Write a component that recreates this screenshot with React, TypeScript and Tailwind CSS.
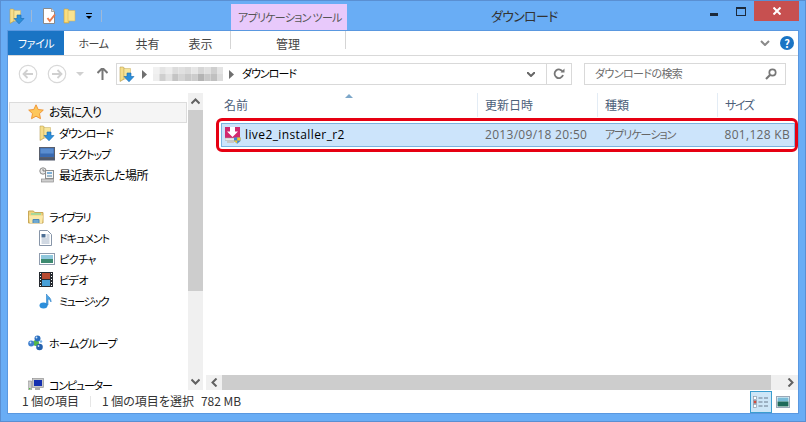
import React from "react";

const DownloadFolder = ({ s = 16 }: { s?: number }) => (
  <svg width={s} height={s} viewBox="0 0 16 16" className="shrink-0">
    <path d="M1 1h3.4l1 1.2V13L1 15.5z" fill="#e2c667" stroke="#b7a05a" strokeWidth=".6" />
    <path d="M5 2.5h6.5v10.5H5z" fill="#f6e59b" stroke="#cdb672" strokeWidth=".6" />
    <path d="M1.5 1.6h2.8v11.2L1.5 14.4z" fill="#f5dd8b" />
    <path d="M8 7h4v3.5h3L10 15.8 5 10.5h3z" fill="#2a8fdc" stroke="#1769ae" strokeWidth=".6" />
  </svg>
);

const PlainFolder = () => (
  <svg width="14" height="16" viewBox="0 0 14 16">
    <path d="M1 1h4l1 1.2V15H1z" fill="#ecc95f" stroke="#c2a24f" strokeWidth=".6" />
    <path d="M5 2.5h7V13H5z" fill="#f8e390" stroke="#d4b662" strokeWidth=".6" />
    <path d="M1.6 1.6h3V14h-3z" fill="#f9dd80" />
  </svg>
);

const NoteCheck = () => (
  <svg width="16" height="16" viewBox="0 0 16 16">
    <path d="M1.5.5h8l3 3v12h-11z" fill="#fff" stroke="#8a8a8a" />
    <path d="M9.5.5v3h3" fill="#ddd" stroke="#8a8a8a" strokeWidth=".7" />
    <path d="M5.5 10l2.3 3 5.2-6.5" fill="none" stroke="#ea7a4a" strokeWidth="2" />
  </svg>
);

const CircleArrow = ({ dir }: { dir: "l" | "r" }) => (
  <svg width="20" height="20" viewBox="0 0 20 20">
    <circle cx="10" cy="10" r="8.7" fill="#fff" stroke="#d8d8d8" strokeWidth="1.2" />
    <path
      d={dir === "l" ? "M15 10H6M9.5 6L5.5 10l4 4" : "M5 10h9M10.5 6l4 4-4 4"}
      fill="none"
      stroke="#d0d0d0"
      strokeWidth="1.8"
    />
  </svg>
);

const Chevron = ({ d, color = "#6a6a6a", w = 9, h = 6, sw = 2 }: { d: string; color?: string; w?: number; h?: number; sw?: number }) => (
  <svg width={w} height={h} viewBox={`0 0 ${w} ${h}`}>
    <path d={d} fill="none" stroke={color} strokeWidth={sw} />
  </svg>
);

const Star = () => (
  <svg width="16" height="16" viewBox="0 0 16 16">
    <path d="M8 .8l2.2 4.7 5.1.6-3.8 3.5 1 5.1L8 12.2l-4.5 2.5 1-5.1L.7 6.1l5.1-.6z" fill="#fdc75c" stroke="#ee8f2c" strokeWidth=".9" />
  </svg>
);

const Desktop = () => (
  <svg width="16" height="14" viewBox="0 0 16 14">
    <rect x=".5" y=".5" width="15" height="10" fill="#3a6ab0" stroke="#5a5f6c" />
    <rect x="1.5" y="1.5" width="13" height="5" fill="#5a8dd0" />
    <rect y="11" width="16" height="2.5" fill="#50596a" />
  </svg>
);

const Recent = () => (
  <svg width="16" height="16" viewBox="0 0 16 16">
    <circle cx="4" cy="4" r="3.2" fill="#e9e9e9" stroke="#8a8a8a" />
    <path d="M4 2v2h2" stroke="#555" strokeWidth=".7" fill="none" />
    <rect x="6.5" y="3.5" width="8" height="8" fill="#f4f4f4" stroke="#8d8d8d" />
    <rect x="8" y="5" width="5" height="2" fill="#7cb0d8" />
    <rect x="8" y="8" width="5" height="2" fill="#9fb8c8" />
    <rect x="2.5" y="12" width="12" height="3" fill="#cfcfcf" stroke="#8d8d8d" strokeWidth=".7" />
  </svg>
);

const Library = () => (
  <svg width="16" height="14" viewBox="0 0 16 14">
    <path d="M.5 2V1h5l1 1.5h8.5V13H.5z" fill="#f0d27c" stroke="#c8a858" />
    <rect x="3" y="3" width="10" height="2" fill="#a8d89a" />
    <path d="M1 5.5h14l-1 7.5H2z" fill="#fbe9a8" />
    <path d="M5 13V9.5h6V13" fill="#6fa9d2" stroke="#4d87b5" />
  </svg>
);

const Doc = () => (
  <svg width="13" height="16" viewBox="0 0 13 16">
    <path d="M.5.5h8l4 4v11H.5z" fill="#fff" stroke="#8795a8" />
    <rect x="2.5" y="4" width="4" height="3.5" fill="#4d6f94" />
    <path d="M7.5 5h3M7.5 7h3M2.5 9h8M2.5 11h8M2.5 13h8" stroke="#8aa0b8" strokeWidth=".8" />
  </svg>
);

const Picture = () => (
  <svg width="16" height="12" viewBox="0 0 16 12">
    <rect x=".5" y=".5" width="15" height="11" fill="#fff" stroke="#8f9cae" />
    <rect x="2" y="2" width="12" height="4" fill="#8fc7dc" />
    <rect x="2" y="6" width="12" height="4" fill="#3d8a70" />
  </svg>
);

const Video = () => (
  <svg width="14" height="15" viewBox="0 0 14 15">
    <rect width="14" height="15" fill="#262a30" />
    <rect x="3" y="1" width="8" height="6" fill="#b84a30" />
    <rect x="3" y="8" width="8" height="6" fill="#47a0d8" />
    <path d="M1 1.5h1M1 4.5h1M1 7.5h1M1 10.5h1M1 13.5h1M12 1.5h1M12 4.5h1M12 7.5h1M12 10.5h1M12 13.5h1" stroke="#fff" strokeWidth="1" />
  </svg>
);

const Music = () => (
  <svg width="14" height="16" viewBox="0 0 14 16">
    <ellipse cx="4.5" cy="12.5" rx="4" ry="3" fill="#2c8fdc" />
    <path d="M7.5 12V1c.5 2 5 3.5 4.5 8-1-2.5-3-3.2-3-3.2V12z" fill="#4ba6e6" stroke="#2a7cc4" strokeWidth=".6" />
  </svg>
);

const HomeGroup = () => (
  <svg width="16" height="16" viewBox="0 0 16 16">
    <circle cx="8" cy="8" r="3" fill="#54b848" />
    <circle cx="9.5" cy="3.5" r="3" fill="#2a6fc0" />
    <circle cx="3.2" cy="8.5" r="3" fill="#3f7fce" />
    <circle cx="11.5" cy="12" r="3.3" fill="#2562ae" />
    <circle cx="13" cy="6.5" r="1.3" fill="#7fb6e8" />
    <circle cx="8.5" cy="2.5" r=".9" fill="#cfe4fa" />
    <circle cx="2.5" cy="7.5" r=".9" fill="#cfe4fa" />
    <circle cx="10.5" cy="11" r=".9" fill="#cfe4fa" />
  </svg>
);

const Computer = () => (
  <svg width="16" height="16" viewBox="0 0 16 16">
    <rect x="0" y="4" width="3.5" height="10" fill="#ccc" stroke="#888" strokeWidth=".6" />
    <rect x="1" y="11" width="1.5" height="1.5" fill="#58b848" />
    <rect x="4.5" y="1.5" width="11" height="9" fill="#c8c8c8" stroke="#888" strokeWidth=".6" />
    <rect x="6" y="3" width="8" height="6" fill="#1530b0" />
    <rect x="7" y="11" width="5" height="2" fill="#aaa" />
  </svg>
);

const AppIcon = () => (
  <svg width="16" height="17" viewBox="0 0 16 17" className="shrink-0">
    <rect x="0" y="0" width="15" height="11" fill="#d2286e" />
    <path d="M5 0h5v4.5h3L7.5 10 2 4.5h3z" fill="#fff" />
    <rect x="0" y="11" width="14" height="2.5" fill="#e8e8e8" stroke="#aaa" strokeWidth=".5" />
    <rect x="2" y="13.5" width="7" height="2.5" fill="#c8c8c8" />
    <path d="M9 10.5h6.5V14L12.2 16.8 9 14z" fill="#3f86d0" />
    <path d="M12.2 10.5h3.3V13.5h-3.3zM9 13.5h3.2v3L9 14z" fill="#f3c632" />
  </svg>
);

const Mosaic = () => {
  const cols = ["#f1f1f1", "#e4e4e4", "#ececec", "#dcdcdc", "#e0e0e0", "#dadada", "#e6e6e6", "#d6d6d6", "#e0e0e0", "#cfcfcf", "#e4e4e4"];
  const cols2 = ["#eeeeee", "#cfcfcf", "#e2e2e2", "#c4c4c4", "#d4d4d4", "#c8c8c8", "#cccccc", "#b4b4b4", "#c8c8c8", "#c0c0c0", "#dcdcdc"];
  return (
    <svg width="70" height="14" viewBox="0 0 70 14" className="shrink-0">
      {cols.map((c, i) => (
        <rect key={i} x={i * 6.4} y="0" width="6.4" height="7" fill={c} />
      ))}
      {cols2.map((c, i) => (
        <rect key={i} x={i * 6.4} y="7" width="6.4" height="7" fill={c} />
      ))}
    </svg>
  );
};

const Tri = ({ className = "" }: { className?: string }) => (
  <svg width="5" height="9" viewBox="0 0 5 9" className={className}>
    <path d="M0 0l5 4.5L0 9z" fill="#6f6f6f" />
  </svg>
);

const NavRow = ({ icon, label, text, level = 0, active = false }: { icon: React.ReactNode; label: string; text: string; level?: 0 | 1; active?: boolean }) => (
  <div
    className={`mx-px flex h-[21px] shrink-0 items-center border pb-[2px] ${level === 0 ? "pl-[18px]" : "pl-[29px]"} ${
      active ? "border-[#dcdcdc] bg-[#f5f5f5]" : "border-transparent"
    }`}
  >
    <span className={`flex justify-start ${level === 0 ? "w-[21px]" : "w-[20px]"}`}>{icon}</span>
    <span className={`whitespace-nowrap text-black ${text}`}>{label}</span>
  </div>
);

const Gap = () => <div className="h-[21px] shrink-0" />;

const ColHead = ({ label, className = "" }: { label: string; className?: string }) => (
  <div className={`flex h-[24px] items-center border-r border-[#e3ecf5] pl-[7px] text-[12px] text-[#4c607a] ${className}`}>{label}</div>
);

export default function App() {
  return (
    <div className="flex h-[422px] w-[806px] flex-col overflow-hidden border border-[#5a8fd2] bg-[#69adf5] font-['Noto_Sans_CJK_JP','Liberation_Sans',sans-serif] text-black [font-feature-settings:'palt']">
      {/* title bar */}
      <div className="relative flex h-[29px] shrink-0 items-center pl-[8px]">
        <div className="flex items-center">
          <DownloadFolder />
          <div className="ml-[6px] h-[12px] w-px bg-[#9fb9d8]" />
          <div className="ml-[10px]"><NoteCheck /></div>
          <div className="ml-[5px]"><PlainFolder /></div>
          <div className="ml-[9px] flex flex-col items-center gap-[2px]">
            <div className="h-px w-[6px] bg-black" />
            <div className="h-0 w-0 border-x-[3px] border-t-[3px] border-x-transparent border-t-black" />
          </div>
          <div className="ml-[9px] h-[12px] w-px bg-[#9fb9d8]" />
        </div>
        <div className="absolute left-[230px] top-[3px] flex h-[26px] w-[116px] items-center whitespace-nowrap bg-[#e8c9fb] pl-[7px] text-[11px] tracking-[-0.7px] text-[#555]">
          アプリケーション ツール
        </div>
        <div className="absolute left-[490px] top-[5px] text-[13px] leading-[20px] tracking-[-0.7px] text-[#333]">ダウンロード</div>
        <div className="absolute right-[6px] top-[0px] flex h-[21px] items-start">
          <div className="mr-[18px] mt-[12px] h-[3px] w-[8px] bg-[#1c2a3c]" />
          <div className="mr-[8px] mt-[6px] h-[9px] w-[10px] border border-t-[2px] border-[#1c2a3c]" />
          <div className="flex h-[20px] w-[45px] items-center justify-center bg-[#c75050]">
            <svg width="8" height="8" viewBox="0 0 8 8">
              <path d="M.5.5l7 7M7.5.5l-7 7" stroke="#fff" strokeWidth="2" />
            </svg>
          </div>
        </div>
      </div>

      {/* client */}
      <div className="mx-[6px] flex min-h-0 flex-1 flex-col border border-[#5a98e0] bg-white">
        {/* ribbon tabs */}
        <div className="flex h-[25px] shrink-0 items-stretch border-b border-[#d9d9d9] text-[12px] text-[#444]">
          <div className="flex w-[56px] items-center justify-center bg-[#1a74c4] pt-[1px] text-[11px] tracking-[-0.4px] text-white">ファイル</div>
          <div className="flex w-[57px] items-center justify-center pl-[2px] pt-[1px] text-[11px] tracking-[-0.4px]">ホーム</div>
          <div className="flex w-[53px] items-center justify-center pt-[1px]">共有</div>
          <div className="flex w-[53px] items-center justify-center pt-[1px]">表示</div>
          <div className="mb-[6px] ml-[3px] flex w-[116px] items-center justify-center border-x border-[#d5d5d5] pt-[7px]">管理</div>
          <div className="flex flex-1 items-center justify-end pr-[4px]">
            <Chevron d="M1 1l4 4 4-4" w={10} h={6} color="#8a8a8a" />
            <div className="ml-[10px] flex h-[14px] w-[14px] items-center justify-center rounded-full bg-[#1a74c4] text-[11px] font-bold leading-none text-white">?</div>
          </div>
        </div>

        {/* address row */}
        <div className="flex h-[30px] shrink-0 items-center pb-[1px] pl-[10px] pr-[12px] pt-[7px]">
          <CircleArrow dir="l" />
          <div className="ml-[9px]"><CircleArrow dir="r" /></div>
          <div className="ml-[9px] h-0 w-0 border-x-[4px] border-t-[4px] border-x-transparent border-t-[#d0d0d0]" />
          <svg width="11" height="12" viewBox="0 0 11 12" className="ml-[13px]">
            <path d="M5.5 0L10.5 5M5.5 0L.5 5M5.5 1v11" fill="none" stroke="#777" strokeWidth="2" />
          </svg>
          <div className="ml-[8px] flex h-[22px] w-[456px] items-center border border-[#d9d9d9] pl-[2px]">
            <DownloadFolder />
            <Tri className="ml-[7px]" />
            <div className="ml-[6px]"><Mosaic /></div>
            <Tri className="ml-[6px]" />
            <span className="ml-[8px] pb-[2px] text-[11px] tracking-[-1px] text-black">ダウンロード</span>
            <div className="ml-auto flex h-full w-[24px] items-center justify-center pr-[6px]">
              <Chevron d="M0 0l4 4 4-4" w={8} h={5} color="#666" />
            </div>
            <div className="flex h-full w-[25px] items-center justify-center border-l border-[#d9d9d9]">
              <svg width="12" height="12" viewBox="0 0 12 12">
                <path d="M9.8 4A4.3 4.3 0 1 0 10 7" fill="none" stroke="#777" strokeWidth="1.8" />
                <path d="M7.5 4.5h4V.5z" fill="#777" />
              </svg>
            </div>
          </div>
          <div className="ml-[12px] flex h-[22px] flex-1 items-center border border-[#d9d9d9] pl-[10px] pr-[8px] text-[11px] tracking-[-0.6px] text-[#6d6d6d]">
            <span className="pb-[2px]">ダウンロードの検索</span>
            <svg width="12" height="12" viewBox="0 0 12 12" className="ml-auto">
              <circle cx="7.5" cy="4.5" r="3.2" fill="none" stroke="#777" strokeWidth="1.7" />
              <path d="M5 7L1 11" stroke="#777" strokeWidth="2.2" />
            </svg>
          </div>
        </div>

        {/* main */}
        <div className="flex min-h-0 flex-1 pt-[7px]">
          {/* nav */}
          <div className="flex w-[195px] shrink-0">
            <div className="flex w-[180px] flex-col overflow-hidden pt-[9px]">
              <NavRow active icon={<Star />} label="お気に入り" text="text-[12px] tracking-[-1px]" />
              <NavRow level={1} icon={<DownloadFolder />} label="ダウンロード" text="pt-[2px] text-[11px] tracking-[-1px]" />
              <NavRow level={1} icon={<Desktop />} label="デスクトップ" text="pt-[2px] text-[11px] tracking-[-1px]" />
              <NavRow level={1} icon={<Recent />} label="最近表示した場所" text="text-[12px] tracking-[-0.6px]" />
              <Gap />
              <NavRow icon={<Library />} label="ライブラリ" text="pt-[2px] text-[11px] tracking-[-1.2px]" />
              <NavRow level={1} icon={<Doc />} label="ドキュメント" text="pt-[2px] text-[11px] tracking-[-1px]" />
              <NavRow level={1} icon={<Picture />} label="ピクチャ" text="pt-[2px] text-[11px] tracking-[-0.5px]" />
              <NavRow level={1} icon={<Video />} label="ビデオ" text="pt-[2px] text-[11px] tracking-[-0.5px]" />
              <NavRow level={1} icon={<Music />} label="ミュージック" text="pt-[2px] text-[11px] tracking-[-1.5px]" />
              <Gap />
              <NavRow icon={<HomeGroup />} label="ホームグループ" text="pt-[2px] text-[11px] tracking-[-0.6px]" />
              <Gap />
              <NavRow icon={<Computer />} label="コンピューター" text="pt-[2px] text-[11px] tracking-[-1.2px]" />
            </div>
            <div className="flex w-[15px] flex-col bg-[#f0f0f0]">
              <div className="flex h-[17px] items-center justify-center">
                <Chevron d="M.5 5.5l4-4 4 4" w={9} h={7} color="#606060" />
              </div>
              <div className="h-[181px] bg-[#cdcdcd]" />
              <div className="mt-auto flex h-[17px] items-center justify-center">
                <Chevron d="M.5 1.5l4 4 4-4" w={9} h={7} color="#606060" />
              </div>
            </div>
          </div>

          {/* file list */}
          <div className="ml-[3px] flex min-w-0 flex-1 flex-col">
            <div className="relative flex shrink-0">
              <ColHead label="名前" className="w-[272px] pl-[18px]" />
              <ColHead label="更新日時" className="w-[120px]" />
              <ColHead label="種類" className="w-[120px]" />
              <ColHead label="サイズ" className="flex-1 border-r-0 tracking-[-1.4px]" />
              <div className="absolute left-[139px] top-[1px] h-0 w-0 border-x-[4px] border-b-[4px] border-x-transparent border-b-[#7da7c9]" />
            </div>
            <div className="flex-1 pl-[10px] pt-[1px]">
              <div className="flex h-[34px] items-center rounded-[6px] border-[3px] border-[#e60012] pb-[2px] pl-[2px] pt-[2px]">
                <div className="flex h-[24px] flex-1 items-center border border-[#7ab3e0] bg-[#cce4fb] text-[12px] text-[#666]">
                  <div className="flex w-[263px] items-center pl-[3px]">
                    <AppIcon />
                    <span className="ml-[4px] font-['Open_Sans',sans-serif] tracking-[0.4px] text-black">live2_installer_r2</span>
                  </div>
                  <div className="w-[120px] font-['Open_Sans',sans-serif] tracking-[0.3px]">2013/09/18 20:50</div>
                  <div className="w-[100px] whitespace-nowrap pb-[2px] text-[11px] tracking-[-1px]">アプリケーション</div>
                  <div className="flex-1 pr-[4px] text-right font-['Open_Sans',sans-serif] tracking-[0.3px]">801,128 KB</div>
                </div>
              </div>
            </div>
            <div className="flex h-[15px] shrink-0 items-center bg-[#f0f0f0]">
              <div className="flex w-[16px] justify-center">
                <Chevron d="M5.5.5l-4 4 4 4" w={7} h={9} color="#606060" />
              </div>
              <div className="h-full w-[549px] bg-[#cdcdcd]" />
              <div className="ml-auto flex w-[16px] justify-center">
                <Chevron d="M1.5.5l4 4-4 4" w={7} h={9} color="#606060" />
              </div>
            </div>
          </div>
        </div>

        {/* status */}
        <div className="flex h-[23px] shrink-0 items-end pl-[14px] pr-[4px] text-[12px] text-[#333]">
          <div className="flex h-[22px] items-center pb-[2px]">
            <span>1 個の項目</span>
            <div className="mx-[11px] h-[11px] w-px bg-[#e6e6e6]" />
            <span>1 個の項目を選択</span>
            <span className="ml-[7px]">782 MB</span>
          </div>
          <div className="ml-auto flex items-center">
            <div className="flex h-[22px] w-[22px] items-center justify-center border border-[#3a9ed0] bg-[#cde6f7]">
              <svg width="16" height="12" viewBox="0 0 16 12">
                <rect x=".5" y=".5" width="3" height="3" fill="#fff" stroke="#8a99aa" strokeWidth=".7" />
                <rect x=".5" y="4.5" width="3" height="3" fill="#d64a3a" stroke="#8a99aa" strokeWidth=".7" />
                <rect x=".5" y="8.5" width="3" height="3" fill="#fff" stroke="#8a99aa" strokeWidth=".7" />
                <path d="M5.5 2h4M11 2h4M5.5 6h4M11 6h4M5.5 10h4M11 10h4" stroke="#6a7a8c" strokeWidth="1" />
              </svg>
            </div>
            <div className="flex h-[22px] w-[22px] items-center justify-center">
              <svg width="14" height="12" viewBox="0 0 14 12">
                <rect x=".5" y=".5" width="13" height="11" fill="#fff" stroke="#9aa8b8" />
                <rect x="1.5" y="1.5" width="11" height="4" fill="#79bcd8" />
                <rect x="1.5" y="5.5" width="11" height="5" fill="#1f6a5a" />
              </svg>
            </div>
          </div>
        </div>
      </div>
      <div className="h-[7px] shrink-0" />
    </div>
  );
}
